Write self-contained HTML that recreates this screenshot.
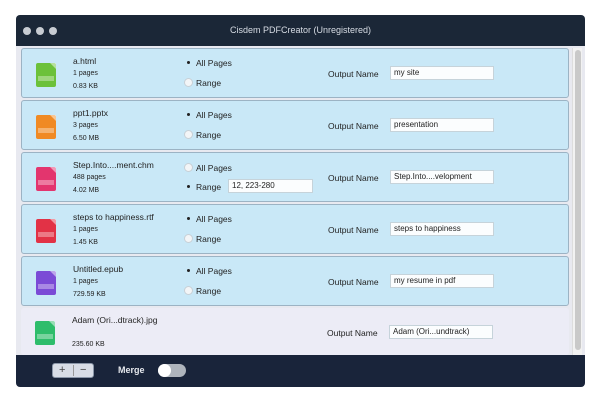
<!DOCTYPE html>
<html><head><style>
*{margin:0;padding:0;box-sizing:border-box}
body{width:600px;height:400px;background:#fff;position:relative;overflow:hidden;font-family:"Liberation Sans",sans-serif;font-size:8px;color:#222}
.win{position:absolute;left:16px;top:15px;width:569px;height:372px;background:#e8e9f0;border-radius:4px;overflow:hidden}
.title{position:absolute;left:0;top:0;width:569px;height:31px;background:#1b2737;color:#d8dde5;font-size:9px;text-align:center;line-height:31px}
.dot{position:absolute;top:12px;width:8px;height:8px;border-radius:50%;background:#c8ccd2}
.row{position:absolute;left:5px;width:548px;height:50px;background:#c9e8f7;border:1px solid #9cb3c4;border-radius:3px}
.row.last{background:#ececf6;border:none}
.ic{position:absolute;left:14px;top:14px;width:20px;height:24px;border-radius:2px}
.ic:after{content:"";position:absolute;right:0;top:0;border-style:solid;border-width:0 6px 6px 0;border-color:transparent #fff transparent transparent;opacity:.5}
.ic i{position:absolute;left:2px;right:2px;top:13px;height:5px;background:rgba(255,255,255,.35)}
.t{position:absolute;left:51px;font-size:8.5px}
.r{position:absolute;left:174px;font-size:8.5px}
.rb{position:absolute;left:-12px;top:0px;width:9px;height:9px;border-radius:50%;background:#f3f5f7;border:1px solid #c8d0d6}
.on2{position:absolute;left:-12px;top:0;width:9px;height:9px}
.on2:after{content:"";position:absolute;left:3px;top:3px;width:3px;height:3px;border-radius:50%;background:#222}
.ol{position:absolute;left:306px;top:20px;font-size:8.5px}
.in{position:absolute;left:368px;top:17px;width:104px;height:14px;background:#fbfdfe;border:1px solid #c6d3da;padding-left:3px;line-height:12px;font-size:8px}
.bot{position:absolute;left:0;top:340px;width:569px;height:32px;background:#19243a}
.scroll{position:absolute;left:556px;top:33px;width:10px;height:307px;background:#f2f2f2;border-left:1px solid #ddd}
.scroll i{position:absolute;left:2px;top:2px;width:6px;height:300px;border-radius:3px;background:#c9c9c9}
</style></head><body>
<div class="win">
<div class="title"><span class="dot" style="left:7px"></span><span class="dot" style="left:20px"></span><span class="dot" style="left:33px"></span>Cisdem PDFCreator (Unregistered)</div>

<div class="row" style="top:33px"><div class="ic" style="background:#6cc13a"><i></i></div>
<div class="t" style="top:7px">a.html</div><div class="t" style="top:21px;font-size:7px">1 pages</div><div class="t" style="top:34px;font-size:7px">0.83 KB</div>
<div class="r" style="top:9px"><span class="on2"></span>All Pages</div>
<div class="r" style="top:29px"><span class="rb"></span>Range</div>
<div class="ol">Output Name</div><div class="in">my site</div></div>

<div class="row" style="top:85px"><div class="ic" style="background:#f08a24"><i></i></div>
<div class="t" style="top:7px">ppt1.pptx</div><div class="t" style="top:21px;font-size:7px">3 pages</div><div class="t" style="top:34px;font-size:7px">6.50 MB</div>
<div class="r" style="top:9px"><span class="on2"></span>All Pages</div>
<div class="r" style="top:29px"><span class="rb"></span>Range</div>
<div class="ol">Output Name</div><div class="in">presentation</div></div>

<div class="row" style="top:137px"><div class="ic" style="background:#e3356e"><i></i></div>
<div class="t" style="top:7px">Step.Into....ment.chm</div><div class="t" style="top:21px;font-size:7px">488 pages</div><div class="t" style="top:34px;font-size:7px">4.02 MB</div>
<div class="r" style="top:10px"><span class="rb"></span>All Pages</div>
<div class="r" style="top:29px"><span class="on2"></span>Range</div>
<div class="in" style="left:206px;top:26px;width:85px">12, 223-280</div>
<div class="ol">Output Name</div><div class="in">Step.Into....velopment</div></div>

<div class="row" style="top:189px"><div class="ic" style="background:#e23246"><i></i></div>
<div class="t" style="top:7px">steps to happiness.rtf</div><div class="t" style="top:21px;font-size:7px">1 pages</div><div class="t" style="top:34px;font-size:7px">1.45 KB</div>
<div class="r" style="top:9px"><span class="on2"></span>All Pages</div>
<div class="r" style="top:29px"><span class="rb"></span>Range</div>
<div class="ol">Output Name</div><div class="in">steps to happiness</div></div>

<div class="row" style="top:241px"><div class="ic" style="background:#7b4bd6"><i></i></div>
<div class="t" style="top:7px">Untitled.epub</div><div class="t" style="top:21px;font-size:7px">1 pages</div><div class="t" style="top:34px;font-size:7px">729.59 KB</div>
<div class="r" style="top:9px"><span class="on2"></span>All Pages</div>
<div class="r" style="top:29px"><span class="rb"></span>Range</div>
<div class="ol">Output Name</div><div class="in">my resume in pdf</div></div>

<div class="row last" style="top:293px;height:47px"><div class="ic" style="background:#2ebd6b;top:13px"><i></i></div>
<div class="t" style="top:7px">Adam (Ori...dtrack).jpg</div><div class="t" style="top:33px;font-size:7px">235.60 KB</div>
<div class="ol">Output Name</div><div class="in">Adam (Ori...undtrack)</div></div>

<div class="scroll"><i></i></div>
<div class="bot">
<div style="position:absolute;left:36px;top:8px;width:42px;height:15px;border:1px solid #8a96a8;border-radius:3px;background:#d8dde6;color:#444;font-size:11px;line-height:13px"><span style="position:absolute;left:6px">+</span><span style="position:absolute;left:20px;top:1px;width:1px;height:11px;background:#999"></span><span style="position:absolute;left:27px">−</span></div>
<div style="position:absolute;left:102px;top:10px;color:#e6e9ee;font-size:9px;font-weight:bold">Merge</div>
<div style="position:absolute;left:142px;top:9px;width:28px;height:13px;border-radius:7px;background:#aeb4bc"><span style="position:absolute;left:0;top:0;width:13px;height:13px;border-radius:50%;background:#fff"></span></div>
</div>
</div>
</body></html>
